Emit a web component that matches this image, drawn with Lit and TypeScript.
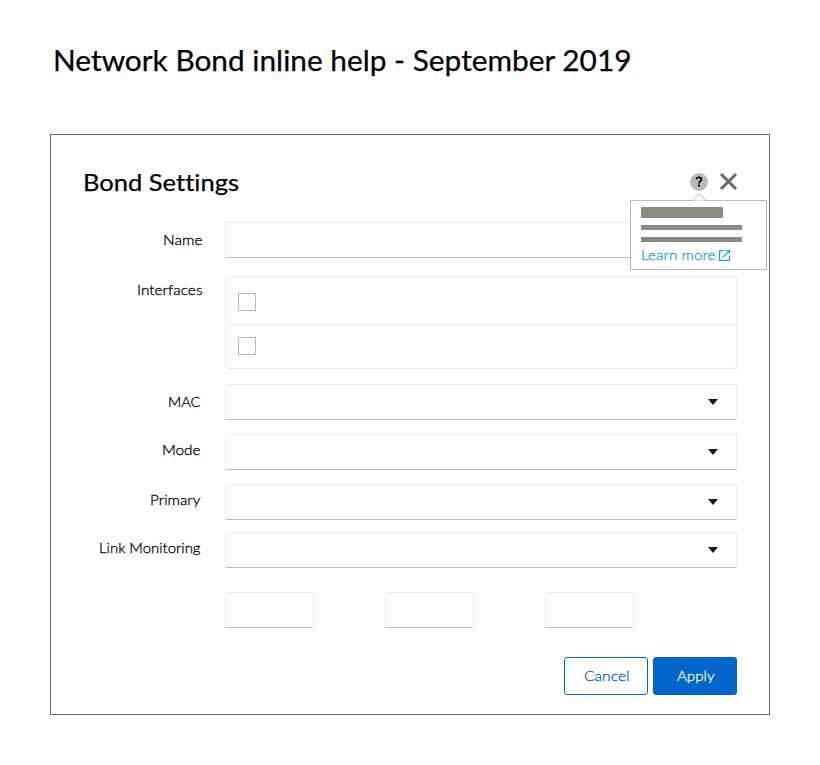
import { LitElement, html, css, svg } from "lit";
import { customElement, property } from "lit/decorators.js";

/** One line of text set to a fixed measure. */
@customElement("fit-text")
class FitText extends LitElement {
  static styles = css`
    :host { display: block; flex: none; }
    svg { display: block; overflow: visible; }
    text { font-family: Lato, "Open Sans", sans-serif; fill: currentColor; font-variant-ligatures: none; }
    .regular { font-weight: 400; stroke: currentColor; stroke-width: 0.25px; }
    .light { font-weight: 300; stroke: currentColor; stroke-width: 0.28px; }
  `;
  @property() text = "";
  @property({ type: Number }) width = 0;
  @property({ type: Number }) size = 14.4;
  @property() tone = "light";

  render() {
    const h = Math.round(this.size * 1.25);
    return html`<svg width=${this.width} height=${h}>
      ${svg`<text class=${this.tone} x="0" y=${this.size} font-size=${this.size}
        textLength=${this.width} lengthAdjust="spacingAndGlyphs">${this.text}</text>`}
    </svg>`;
  }
}

@customElement("app-root")
class AppRoot extends LitElement {
  static styles = css`
    :host { display: block; width: 820px; height: 765px; background: #fff; color: #000; overflow: hidden; }
    * { box-sizing: border-box; }
    .page { padding: 42px 50px 0; }
    .title { margin: 0 0 0 3px; height: 92px; }
    .dialog { width: 720px; height: 581px; border: 1px solid #696a6c; padding: 32px 32px 0 32px; }
    .head { display: flex; justify-content: space-between; height: 55px; }
    .heading { margin: 0; }
    .actions { display: flex; align-items: flex-start; gap: 11px; padding-top: 6px; margin-right: -1px; }
    .help { position: relative; width: 18px; height: 18px; }
    .icon { display: block; }
    .close { margin-top: -1px; }
    .popover { position: absolute; z-index: 2; left: -60px; top: 27px; width: 137px; height: 70px;
      border: 1px solid #babbbb; background: #fff; padding: 6px 10px 0; }
    .arrow { position: absolute; left: 61px; top: -8px; display: block; }
    .bar { width: 101px; height: 5px; background: #8a8b84; margin-top: 7px; }
    .bar.big { width: 82px; height: 11px; margin-top: 0; }
    .link { display: flex; align-items: flex-start; gap: 3px; color: #1ea0dc; margin-top: 4px; }
    .link .icon { margin-top: 4px; }
    .row { display: flex; justify-content: space-between; width: 654px; }
    .label { display: flex; justify-content: flex-end; width: 117.5px; padding-top: 9px; }
    .label.wide { width: 119.5px; padding-top: 8.7px; }
    .field { width: 512px; height: 36px; border: 1px solid #ededed; border-bottom-color: #b8bbbe;
      border-radius: 2px; background: #fff; display: flex; align-items: center;
      justify-content: flex-end; padding-right: 18px; }
    .field.small { width: 89px; }
    .list { width: 512px; height: 93px; border: 1px solid #ededed; border-radius: 2px; }
    .item { height: 47px; padding: 16px 0 0 12px; }
    .item + .item { border-top: 1px solid #ededed; height: 44px; padding-top: 12px; }
    .check { width: 18px; height: 18px; border: 1px solid #b8bbbe; }
    .g18 { margin-top: 18px; }
    .g15 { margin-top: 15px; }
    .g14 { margin-top: 14px; }
    .g12 { margin-top: 12px; }
    .label.up { padding-top: 4.7px; }
    .mac { padding-top: 8.7px; }
    .mid { padding-top: 7px; }
    .trio { display: flex; gap: 71px; margin: 24px 0 0 142px; }
    .footer { display: flex; justify-content: flex-end; gap: 5px; margin-top: 29px; }
    .btn { display: flex; justify-content: center; width: 84px; height: 38px; margin: 0; padding: 9px 0 0 1px;
      border: 1px solid #06c; border-radius: 3px; background: #fff; color: #06c; align-items: flex-start; }
    .btn.primary { background: #06c; color: #fff; }
  `;

  private select(label: string, width: number, gap: string, pad: string) {
    return html`<div class="row ${gap}">
      <div class="label ${pad}"><fit-text .text=${label} .width=${width}></fit-text></div>
      <div class="field">
        <svg class="icon" width="10" height="6" viewBox="0 0 10 6"><path d="M0 0h10L5 6z" fill="#151515" /></svg>
      </div>
    </div>`;
  }

  render() {
    return html`<main class="page">
      <h1 class="title"><fit-text tone="regular" text="Network Bond inline help - September 2019" .width=${578.5} .size=${28.8}></fit-text></h1>
      <section class="dialog">
        <header class="head">
          <h2 class="heading"><fit-text tone="regular" text="Bond Settings" .width=${156} .size=${23.5}></fit-text></h2>
          <div class="actions">
            <div class="help">
              <svg class="icon" width="18" height="18" viewBox="0 0 18 18">
                <circle cx="9" cy="9" r="9" fill="#b8babc" />
                <path d="M6.2 6.3C6.5 5.1 7.5 4.4 8.9 4.4c1.5 0 2.5.8 2.5 2.1 0 1.7-2.4 1.7-2.4 3.9" fill="none" stroke="#000" stroke-width="1.8" />
                <circle cx="9" cy="12.7" r="1.15" />
              </svg>
              <div class="popover">
                <svg class="arrow" width="14" height="8" viewBox="0 0 14 8"><path d="M0 7.5 7 .7l7 6.8" fill="#fff" stroke="#babbbb" /></svg>
                <div class="bar big"></div>
                <div class="bar"></div>
                <div class="bar"></div>
                <div class="link">
                  <fit-text text="Learn more" .width=${74.5}></fit-text>
                  <svg class="icon" width="11" height="11" viewBox="0 0 11 11" fill="none" stroke="currentColor">
                    <path d="M4.7.6H.6v9.8h9.8V6M6.5.6h3.9v3.9M10.2.8 3.4 7.6" stroke-width="1.1" />
                  </svg>
                </div>
              </div>
            </div>
            <svg class="icon close" width="19" height="19" viewBox="0 0 19 19"><path d="m2 2 15 15M17 2 2 17" stroke="#696969" stroke-width="3" /></svg>
          </div>
        </header>
        <div class="row">
          <div class="label wide"><fit-text text="Name" .width=${39.5}></fit-text></div>
          <div class="field"></div>
        </div>
        <div class="row g18">
          <div class="label wide up"><fit-text text="Interfaces" .width=${65.5}></fit-text></div>
          <div class="list">
            <div class="item"><div class="check"></div></div>
            <div class="item"><div class="check"></div></div>
          </div>
        </div>
        ${this.select("MAC", 32.5, "g15", "mac")}
        ${this.select("Mode", 38.5, "g14", "mid")}
        ${this.select("Primary", 50.5, "g14", "mid")}
        ${this.select("Link Monitoring", 101.5, "g12", "mid")}
        <div class="trio">
          <div class="field small"></div><div class="field small"></div><div class="field small"></div>
        </div>
        <footer class="footer">
          <button class="btn"><fit-text text="Cancel" .width=${45.5}></fit-text></button>
          <button class="btn primary"><fit-text text="Apply" .width=${37.5}></fit-text></button>
        </footer>
      </section>
    </main>`;
  }
}
